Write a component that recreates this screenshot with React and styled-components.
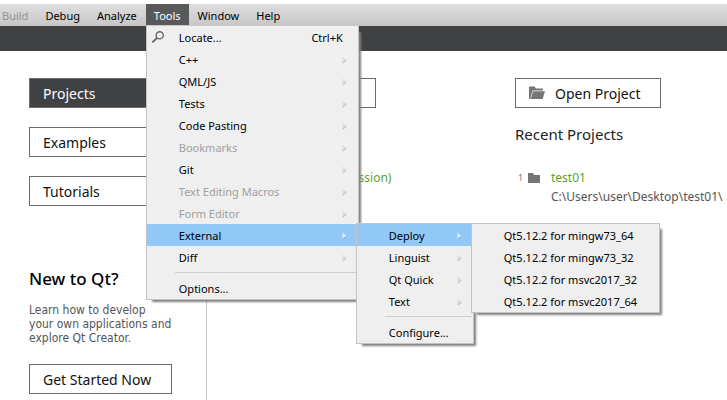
import React from "react";
import styled, { createGlobalStyle, css } from "styled-components";

const Global = createGlobalStyle`
  * { box-sizing: border-box; }
  body { margin: 0; background: #fff; overflow: hidden; }
  button { font: inherit; color: inherit; background: none; border: 0; padding: 0; margin: 0; text-align: left; cursor: default; }
  ul { list-style: none; margin: 0; padding: 0; }
`;

const Window = styled.div`
  display: flex;
  flex-direction: column;
  min-height: 100vh;
  padding-top: 4px;
  overflow: hidden;
  font-family: "Noto Sans", "Segoe UI", sans-serif;
  font-size: 12px;
  color: #1a1a1a;
`;

const MenuBar = styled.nav`
  position: relative;
  z-index: 1;
  display: flex;
  gap: 1px;
  height: 22px;
  margin-left: -6px;
  font-size: 11px;
  background: linear-gradient(#dedede, #c6c6c6);
`;

const MenuBarItem = styled.div`
  position: relative;
  display: flex;
`;

const MenuBarButton = styled.button`
  height: 21px;
  padding: 2px 8px 0;
  line-height: 20px;
  color: ${(p) => (p.$open ? "#fff" : "#000")};
  background: ${(p) => (p.$open ? "#58595a" : "transparent")};
  &:disabled { color: #939393; }
`;

const MenuPanel = styled.ul`
  position: absolute;
  width: ${(p) => p.$width}px;
  border: 1px solid #c3c3c3;
  background: #efefef;
  box-shadow: 4px 4px 2px -2px #808080;
  ${(p) =>
    p.$nested
      ? css`
          left: calc(100% - 2px);
          top: -1px;
        `
      : css`
          left: 0;
          top: 100%;
          border-top: 0;
        `}
`;

const MenuEntry = styled.li`
  position: relative;
`;

const MenuButton = styled.button`
  display: grid;
  grid-template-columns: 32px 1fr auto;
  align-items: center;
  width: 100%;
  height: 22px;
  padding: 2px 11px 0 0;
  line-height: 20px;
  white-space: nowrap;
  color: #000;
  background: ${(p) => (p.$open ? "#91c8f6" : "transparent")};
  &:disabled { color: #a0a0a0; }
`;

const IconSlot = styled.span`
  display: flex;
  padding-left: 4px;
`;

const Shortcut = styled.span`
  padding-right: 4px;
`;

const Divider = styled.li`
  height: 9px;
  padding: 4px 1px 0 28px;
  &::before { content: ""; display: block; border-top: 1px solid #cfcfcf; }
`;

const Toolbar = styled.div`
  height: 25px;
  background: #404142;
`;

const Body = styled.div`
  display: grid;
  grid-template-columns: 207px 1fr;
  flex: 1;
`;

const Sidebar = styled.aside`
  display: flex;
  flex-direction: column;
  padding: 27px 34px 6px 29px;
  border-right: 1px solid #c8c8c8;
`;

const SideNav = styled.div`
  display: flex;
  flex-direction: column;
  gap: 19px;
`;

const FrameButton = styled.button`
  display: flex;
  align-items: center;
  gap: 9px;
  width: 100%;
  height: 30px;
  padding: 0 13px;
  border: 1px solid #6b6c6d;
  font-size: 14px;
  white-space: nowrap;
  color: ${(p) => (p.$active ? "#fff" : "#111")};
  background: ${(p) => (p.$active ? "#404142" : "#fff")};
`;

const Intro = styled.section`
  margin-top: 62px;
`;

const IntroTitle = styled.h2`
  margin: 0 0 13px;
  font-size: 17px;
  font-weight: 500;
  line-height: 22px;
  color: #000;
`;

const IntroText = styled.p`
  margin: 0 0 19px;
  font-family: "DejaVu Sans Condensed", Tahoma, sans-serif;
  line-height: 14px;
  white-space: nowrap;
  color: #555;
`;

const Main = styled.main`
  display: grid;
  grid-template-columns: 285px 1fr;
  align-items: start;
  padding: 27px 0 0 23px;
  overflow: hidden;
`;

const Column = styled.section`
  display: flex;
  flex-direction: column;
  min-width: 0;
`;

const ActionSlot = styled.div`
  width: 146px;
`;

const Heading = styled.h2`
  height: 22px;
  margin: 15px 0 0;
  font-size: 15px;
  font-weight: 400;
  line-height: 22px;
  color: #222;
`;

const Entry = styled.div`
  display: grid;
  grid-template-columns: 13px ${(p) => (p.$compact ? 12 : 23)}px 1fr;
  align-items: center;
  margin-top: 23px;
  line-height: 19px;
  white-space: nowrap;
`;

const Index = styled.span`
  padding-left: 3px;
  font-size: 9px;
  color: #777;
`;

const EntryLink = styled.a`
  grid-column: 3;
  color: #57a332;
  text-decoration: none;
`;

const EntryPath = styled.span`
  grid-column: 3;
  color: #555;
`;

const SearchIcon = () => (
  <svg width="16" height="16" viewBox="0 0 16 16" fill="none" stroke="#666">
    <circle cx="8.7" cy="5.3" r="3.6" strokeWidth="1.4" />
    <path d="M6 8 1.3 12.4" strokeWidth="1.9" />
  </svg>
);

const Arrow = ({ open }) => (
  <svg width="5" height="8" viewBox="0 0 5 8">
    <path d="M.5.5 4.5 4 .5 7.5Z" fill={open ? "#d9efff" : "#dcdcdc"} />
    <path d="M4.5 4 1 7" fill="none" stroke={open ? "#6f9dc4" : "#aaa"} strokeWidth=".8" />
  </svg>
);

const OpenFolderIcon = () => (
  <svg width="17" height="14" viewBox="0 0 17 14" fill="#747576">
    <path d="M0 0.5H5.5L7 2.5H14V4.5H3.6L1.6 11.5V13H0Z" />
    <path d="M4 5.3H16L13.7 13H1.8Z" />
  </svg>
);

const FolderIcon = () => (
  <svg width="12" height="10" viewBox="0 0 12 10" fill="#747576">
    <path d="M0 0H5L6.2 2H12V10H0Z" />
  </svg>
);

const qtKits = [
  { label: "Qt5.12.2 for mingw73_64" },
  { label: "Qt5.12.2 for mingw73_32" },
  { label: "Qt5.12.2 for msvc2017_32" },
  { label: "Qt5.12.2 for msvc2017_64" },
];

const externalTools = [
  { label: "Deploy", sub: true, items: qtKits, width: 189 },
  { label: "Linguist", sub: true },
  { label: "Qt Quick", sub: true },
  { label: "Text", sub: true },
  { divider: true },
  { label: "Configure..." },
];

const toolsMenu = [
  { label: "Locate...", shortcut: "Ctrl+K", icon: <SearchIcon /> },
  { label: "C++", sub: true },
  { label: "QML/JS", sub: true },
  { label: "Tests", sub: true },
  { label: "Code Pasting", sub: true },
  { label: "Bookmarks", sub: true, disabled: true },
  { label: "Git", sub: true },
  { label: "Text Editing Macros", sub: true, disabled: true },
  { label: "Form Editor", sub: true, disabled: true },
  { label: "External", sub: true, items: externalTools, width: 118 },
  { label: "Diff", sub: true },
  { divider: true },
  { label: "Options..." },
];

function Menu({ items, width, nested }) {
  return (
    <MenuPanel $width={width} $nested={nested}>
      {items.map((item, i) =>
        item.divider ? (
          <Divider key={i} />
        ) : (
          <MenuEntry key={item.label}>
            <MenuButton $open={!!item.items} disabled={item.disabled}>
              <IconSlot>{item.icon}</IconSlot>
              <span>{item.label}</span>
              {item.shortcut && <Shortcut>{item.shortcut}</Shortcut>}
              {item.sub && <Arrow open={!!item.items} />}
            </MenuButton>
            {item.items && <Menu items={item.items} width={item.width} nested />}
          </MenuEntry>
        )
      )}
    </MenuPanel>
  );
}

const barItems = [
  { label: "Build", disabled: true },
  { label: "Debug" },
  { label: "Analyze" },
  { label: "Tools", items: toolsMenu, width: 213 },
  { label: "Window" },
  { label: "Help" },
];

export default function App() {
  return (
    <Window>
      <Global />
      <MenuBar>
        {barItems.map((item) => (
          <MenuBarItem key={item.label}>
            <MenuBarButton $open={!!item.items} disabled={item.disabled}>
              {item.label}
            </MenuBarButton>
            {item.items && <Menu items={item.items} width={item.width} />}
          </MenuBarItem>
        ))}
      </MenuBar>
      <Toolbar />
      <Body>
        <Sidebar>
          <SideNav>
            <FrameButton $active>Projects</FrameButton>
            <FrameButton>Examples</FrameButton>
            <FrameButton>Tutorials</FrameButton>
          </SideNav>
          <Intro>
            <IntroTitle>New to Qt?</IntroTitle>
            <IntroText>
              Learn how to develop
              <br />
              your own applications and
              <br />
              explore Qt Creator.
            </IntroText>
            <FrameButton>Get Started Now</FrameButton>
          </Intro>
        </Sidebar>
        <Main>
          <Column>
            <ActionSlot>
              <FrameButton aria-label="New Session" />
            </ActionSlot>
            <Heading aria-hidden="true" />
            <Entry $compact>
              <EntryLink href="#session">default (current session)</EntryLink>
            </Entry>
          </Column>
          <Column>
            <ActionSlot>
              <FrameButton>
                <OpenFolderIcon />
                Open Project
              </FrameButton>
            </ActionSlot>
            <Heading>Recent Projects</Heading>
            <Entry>
              <Index>1</Index>
              <FolderIcon />
              <EntryLink href="#test01">test01</EntryLink>
              <EntryPath>{"C:\\Users\\user\\Desktop\\test01\\"}</EntryPath>
            </Entry>
          </Column>
        </Main>
      </Body>
    </Window>
  );
}
